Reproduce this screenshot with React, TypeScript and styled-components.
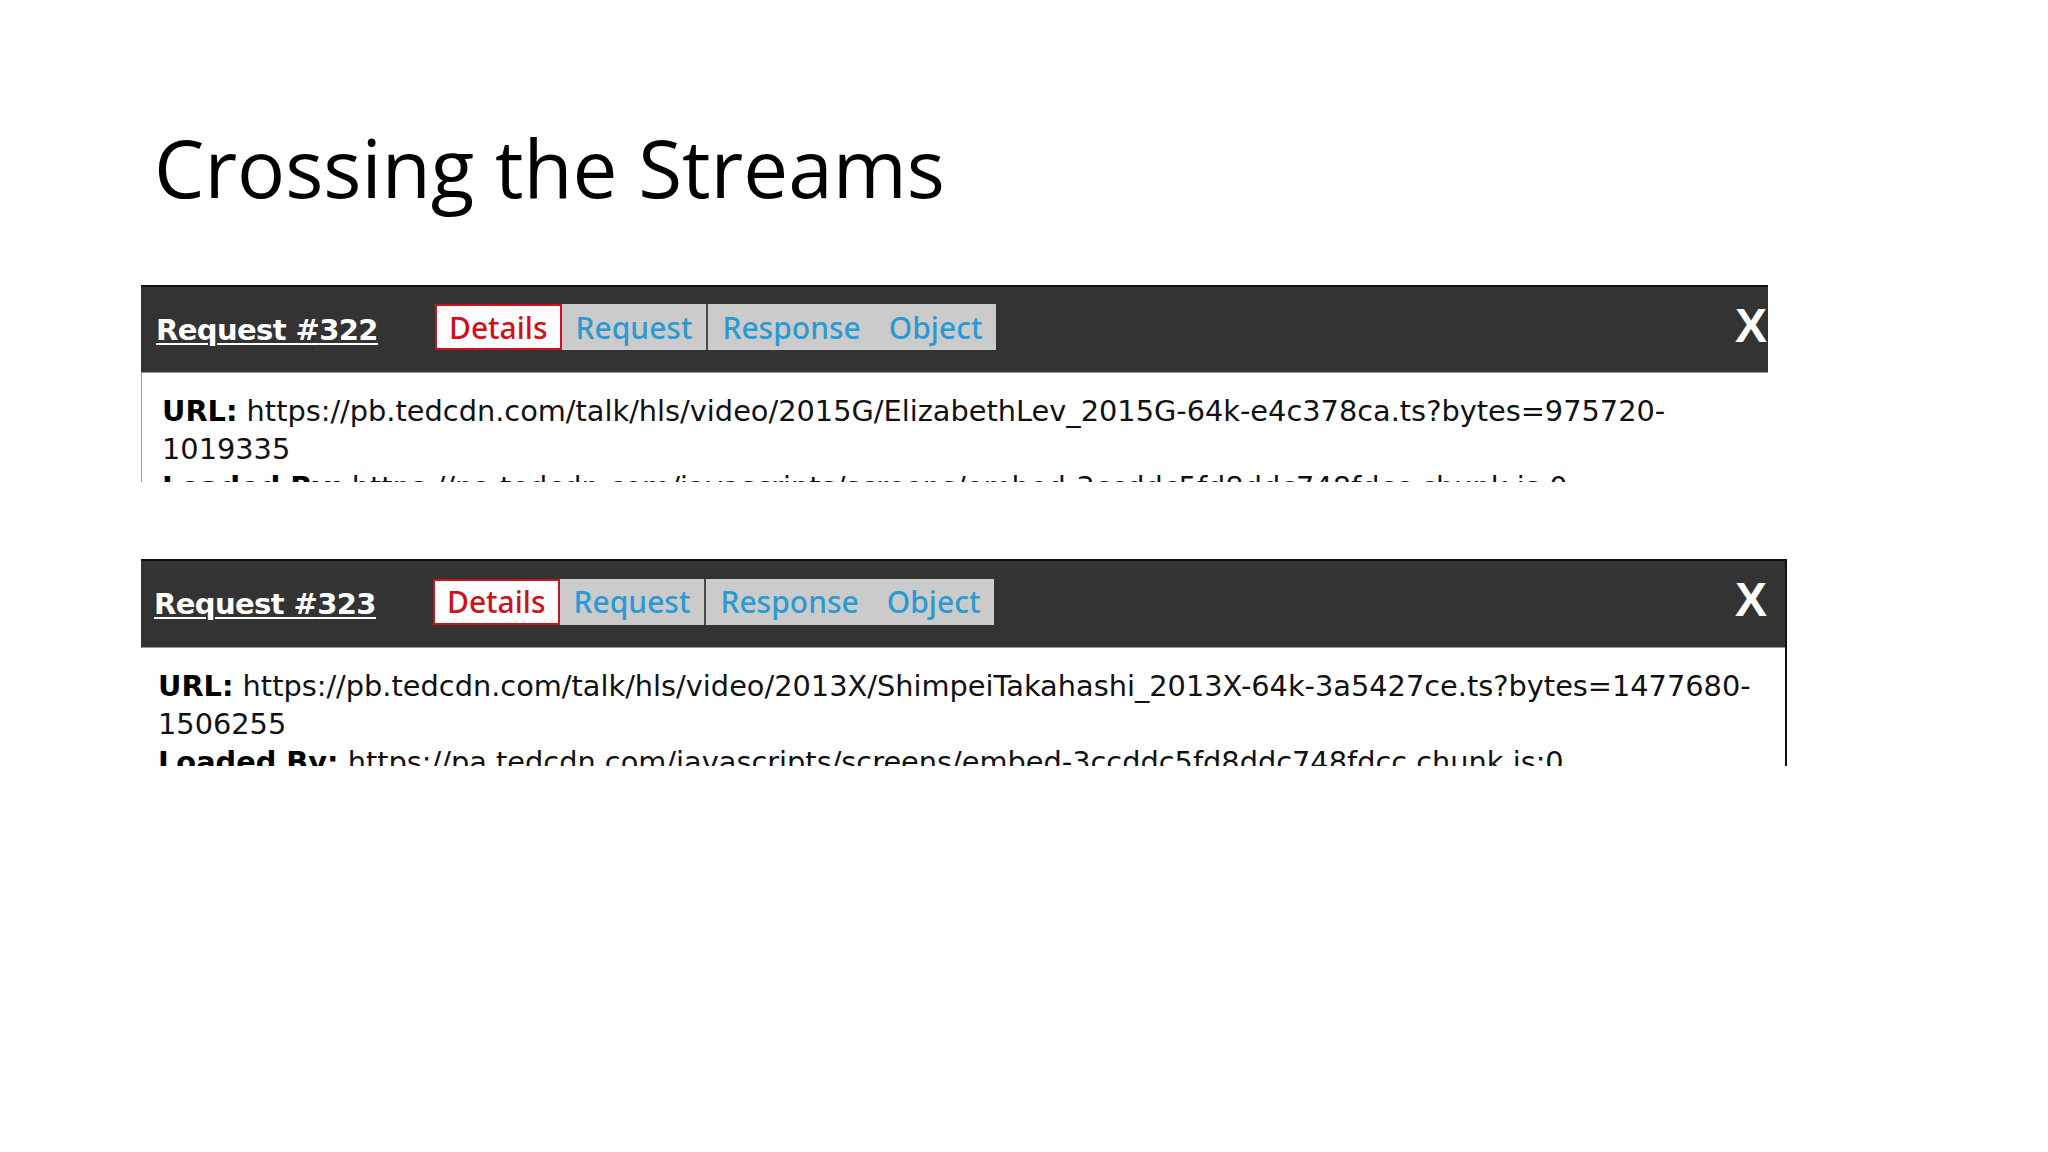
import React from 'react';
import styled, { createGlobalStyle } from 'styled-components';

const GlobalStyle = createGlobalStyle`
  html, body {
    margin: 0;
    padding: 0;
    background: #ffffff;
  }
  body {
    width: 2048px;
    height: 1152px;
    overflow: hidden;
  }
`;

const Slide = styled.div`
  display: flex;
  flex-direction: column;
  align-items: flex-start;
  width: 2048px;
  height: 1152px;
  box-sizing: border-box;
  padding: 127px 0 0 141px;
  background: #ffffff;
`;

const Title = styled.h1`
  margin: 0 0 78px 13px;
  font-family: 'Open Sans', 'Liberation Sans', sans-serif;
  font-weight: 400;
  font-size: 80px;
  line-height: 80px;
  color: #000000;
`;

const PanelStack = styled.div`
  display: flex;
  flex-direction: column;
  gap: 77px;
`;

const Panel = styled.section<{ $width: number; $edge: boolean }>`
  width: ${p => p.$width}px;
  box-sizing: border-box;
  overflow: hidden;
  background: #ffffff;
  border-right: ${p => (p.$edge ? '2px solid #111' : 'none')};
`;

const Header = styled.header<{ $inset: number; $height: number }>`
  display: flex;
  align-items: center;
  width: 1644px;
  height: ${p => p.$height}px;
  box-sizing: border-box;
  padding: 0 18px 0 ${p => p.$inset}px;
  background: #333333;
  border-top: 2px solid #111111;
  border-bottom: 1px solid #9a9a9a;
`;

const RequestTitle = styled.a`
  margin-right: 57px;
  font-family: 'DejaVu Sans', Verdana, sans-serif;
  font-weight: 700;
  font-size: 29px;
  letter-spacing: -0.6px;
  color: #ffffff;
  text-decoration: underline;
  text-underline-offset: 3px;
  text-decoration-thickness: 2px;
`;

const Tabs = styled.nav`
  display: flex;
  height: 46px;
  margin-top: -5px;
  background: #cbcbcb;
`;

const Tab = styled.span<{ $active?: boolean; $divider?: boolean }>`
  display: flex;
  align-items: center;
  box-sizing: border-box;
  height: 46px;
  padding: 0 ${p => (p.$active ? 12 : 14)}px;
  font-family: 'Noto Sans', 'Open Sans', sans-serif;
  font-weight: 500;
  font-size: 30px;
  color: ${p => (p.$active ? '#d0101c' : '#2b9ad2')};
  background: ${p => (p.$active ? '#ffffff' : 'transparent')};
  border: ${p => (p.$active ? '2px solid #d0101c' : 'none')};
  border-left: ${p =>
    p.$active ? '2px solid #d0101c' : p.$divider ? '2px solid #4a4a4a' : 'none'};
`;

const Close = styled.span`
  margin-left: auto;
  margin-bottom: 8px;
  font-family: 'Liberation Sans', Arial, sans-serif;
  font-weight: 700;
  font-size: 48px;
  line-height: 1;
  color: #ffffff;
`;

const Body = styled.div<{ $height: number; $top: number; $inset: number; $rule: boolean }>`
  height: ${p => p.$height}px;
  box-sizing: border-box;
  padding: ${p => p.$top}px 0 0 ${p => p.$inset}px;
  border-left: ${p => (p.$rule ? '1px solid #9a9a9a' : 'none')};
  overflow: hidden;
  font-family: 'DejaVu Sans', Verdana, sans-serif;
  font-size: 28.8px;
  line-height: 38px;
  color: #111111;
`;

const Line = styled.div`
  white-space: nowrap;
`;

const Label = styled.b`
  font-weight: 700;
  color: #000000;
`;

type Req = {
  id: number;
  url: string[];
  loadedBy: string;
  width: number;
  edge: boolean;
  rule: boolean;
  headerHeight: number;
  bodyHeight: number;
  inset: number;
  bodyTop: number;
  bodyInset: number;
};

const requests: Req[] = [
  {
    id: 322,
    url: [
      'https://pb.tedcdn.com/talk/hls/video/2015G/ElizabethLev_2015G-64k-e4c378ca.ts?bytes=975720-',
      '1019335',
    ],
    loadedBy: 'https://pa.tedcdn.com/javascripts/screens/embed-3ccddc5fd8ddc748fdcc.chunk.js:0',
    width: 1627,
    edge: false,
    rule: true,
    headerHeight: 88,
    bodyHeight: 109,
    inset: 15,
    bodyTop: 19,
    bodyInset: 20,
  },
  {
    id: 323,
    url: [
      'https://pb.tedcdn.com/talk/hls/video/2013X/ShimpeiTakahashi_2013X-64k-3a5427ce.ts?bytes=1477680-',
      '1506255',
    ],
    loadedBy: 'https://pa.tedcdn.com/javascripts/screens/embed-3ccddc5fd8ddc748fdcc.chunk.js:0',
    width: 1646,
    edge: true,
    rule: false,
    headerHeight: 89,
    bodyHeight: 118,
    inset: 13,
    bodyTop: 19,
    bodyInset: 17,
  },
];

function RequestPanel({ req }: { req: Req }) {
  return (
    <Panel $width={req.width} $edge={req.edge}>
      <Header $inset={req.inset} $height={req.headerHeight}>
        <RequestTitle>Request #{req.id}</RequestTitle>
        <Tabs>
          <Tab $active>Details</Tab>
          <Tab>Request</Tab>
          <Tab $divider>Response</Tab>
          <Tab>Object</Tab>
        </Tabs>
        <Close>X</Close>
      </Header>
      <Body
        $height={req.bodyHeight}
        $top={req.bodyTop}
        $inset={req.bodyInset}
        $rule={req.rule}
      >
        <Line>
          <Label>URL:</Label> {req.url[0]}
        </Line>
        <Line>{req.url[1]}</Line>
        <Line>
          <Label>Loaded By:</Label> {req.loadedBy}
        </Line>
      </Body>
    </Panel>
  );
}

export default function App() {
  return (
    <>
      <GlobalStyle />
      <Slide>
        <Title>Crossing the Streams</Title>
        <PanelStack>
          {requests.map(r => (
            <RequestPanel key={r.id} req={r} />
          ))}
        </PanelStack>
      </Slide>
    </>
  );
}
